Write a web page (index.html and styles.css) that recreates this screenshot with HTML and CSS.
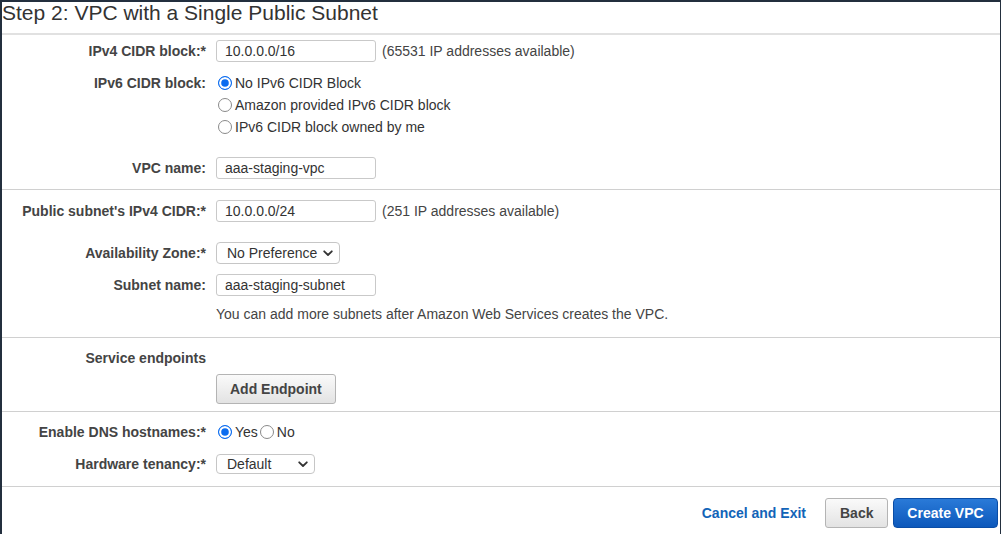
FILE: index.html
```html
<!DOCTYPE html>
<html>
<head>
<meta charset="utf-8">
<link rel="stylesheet" href="styles.css">
</head>
<body>
<div class="wizard">
  <h1 class="title">Step 2: VPC with a Single Public Subnet</h1>

  <section class="sec sec-vpc">
    <div class="row">
      <label class="lbl">IPv4 CIDR block:*</label>
      <div class="ctl"><input class="field w160" value="10.0.0.0/16" readonly><span class="hint">(65531 IP addresses available)</span></div>
    </div>
    <div class="row row-top gap10">
      <label class="lbl">IPv6 CIDR block:</label>
      <div class="ctl stack">
        <label class="opt"><input type="radio" class="radio" name="v6" checked>No IPv6 CIDR Block</label>
        <label class="opt"><input type="radio" class="radio" name="v6">Amazon provided IPv6 CIDR block</label>
        <label class="opt"><input type="radio" class="radio" name="v6">IPv6 CIDR block owned by me</label>
      </div>
    </div>
    <div class="row gap19">
      <label class="lbl">VPC name:</label>
      <div class="ctl"><input class="field w160" value="aaa-staging-vpc" readonly></div>
    </div>
  </section>

  <section class="sec sec-subnet">
    <div class="row">
      <label class="lbl">Public subnet's IPv4 CIDR:*</label>
      <div class="ctl"><input class="field w160" value="10.0.0.0/24" readonly><span class="hint">(251 IP addresses available)</span></div>
    </div>
    <div class="row gap20">
      <label class="lbl">Availability Zone:*</label>
      <div class="ctl">
        <div class="select w124"><span>No Preference</span><svg class="chev" width="10" height="7" viewBox="0 0 10 7"><path d="M1.2 1.3 L5 5 L8.8 1.3" fill="none" stroke="#333" stroke-width="1.8" stroke-linecap="round" stroke-linejoin="round"/></svg></div>
      </div>
    </div>
    <div class="row gap10">
      <label class="lbl">Subnet name:</label>
      <div class="ctl"><input class="field w160" value="aaa-staging-subnet" readonly></div>
    </div>
    <div class="row gap7">
      <span class="lbl"></span>
      <div class="ctl note">You can add more subnets after Amazon Web Services creates the VPC.</div>
    </div>
  </section>

  <section class="sec sec-endpoints">
    <div class="row">
      <label class="lbl">Service endpoints</label>
      <div class="ctl"></div>
    </div>
    <div class="row gap5">
      <span class="lbl"></span>
      <div class="ctl"><button class="btn">Add Endpoint</button></div>
    </div>
  </section>

  <section class="sec sec-dns">
    <div class="row">
      <label class="lbl">Enable DNS hostnames:*</label>
      <div class="ctl">
        <label class="opt"><input type="radio" class="radio" name="dns" checked>Yes</label>
        <label class="opt"><input type="radio" class="radio" name="dns">No</label>
      </div>
    </div>
    <div class="row gap10">
      <label class="lbl">Hardware tenancy:*</label>
      <div class="ctl">
        <div class="select w99 short"><span>Default</span><svg class="chev" width="10" height="7" viewBox="0 0 10 7"><path d="M1.2 1.3 L5 5 L8.8 1.3" fill="none" stroke="#333" stroke-width="1.8" stroke-linecap="round" stroke-linejoin="round"/></svg></div>
      </div>
    </div>
  </section>

  <footer class="actions">
    <a class="link" href="#">Cancel and Exit</a>
    <button class="btn back">Back</button>
    <button class="btn primary">Create VPC</button>
  </footer>
</div>
</body>
</html>
```

FILE: styles.css
```css
* { box-sizing: border-box; }

html, body {
  margin: 0;
  padding: 0;
  background: #fff;
}

body {
  font-family: "Liberation Sans", Arial, Helvetica, sans-serif;
  font-size: 14px;
  color: #444;
  width: 1001px;
  height: 534px;
  overflow: hidden;
}

.wizard {
  border-top: 2px solid #232f3e;
  border-left: 2px solid #232f3e;
  border-right: 1px solid #232f3e;
  height: 534px;
}

.title {
  margin: 0;
  height: 33px;
  padding: 0;
  font-size: 21px;
  font-weight: normal;
  line-height: 22px;
  color: #333;
  border-bottom: 2px solid #e1e1e1;
}

.sec {
  border-bottom: 1px solid #d0d0d0;
}

.sec-vpc { padding: 5px 0 10px; }
.sec-subnet { padding: 10px 0 12px; }
.sec-endpoints { padding: 9px 0 7px; }
.sec-dns { padding: 9px 0 11px; }

.row {
  display: grid;
  grid-template-columns: 204px 1fr;
  column-gap: 10px;
  align-items: center;
  min-height: 22px;
}

.row-top { align-items: start; }

.gap5 { margin-top: 5px; }
.gap7 { margin-top: 7px; }
.gap10 { margin-top: 10px; }
.gap19 { margin-top: 19px; }
.gap20 { margin-top: 20px; }

.lbl {
  text-align: right;
  font-weight: bold;
  line-height: 22px;
  color: #444;
  white-space: nowrap;
}

.ctl {
  display: flex;
  align-items: center;
  min-height: 22px;
}

.stack {
  flex-direction: column;
  align-items: flex-start;
}

.field {
  height: 22px;
  border: 1px solid #c9c9c9;
  border-radius: 3px;
  padding: 0 8px;
  font: 14px "Liberation Sans", Arial, sans-serif;
  color: #333;
  background: #fff;
  outline: none;
}

.w160 { width: 160px; }
.w124 { width: 124px; }
.w99 { width: 99px; }

.hint {
  margin-left: 6px;
  color: #444;
}

.opt {
  display: flex;
  align-items: center;
  height: 22px;
  line-height: 22px;
  color: #333;
  white-space: nowrap;
}

.radio {
  appearance: none;
  -webkit-appearance: none;
  width: 14px;
  height: 14px;
  margin: 0 3px 0 2px;
  border: 1px solid #8a8a8a;
  border-radius: 50%;
  background: #fff;
  flex: none;
}

.radio:checked {
  border: 1.5px solid #0b6cf0;
  background: #0b6cf0;
  box-shadow: inset 0 0 0 2.2px #fff;
}

.select {
  height: 22px;
  display: flex;
  align-items: center;
  justify-content: space-between;
  border: 1px solid #c6c6c6;
  border-radius: 4px;
  padding: 0 6px 0 10px;
  color: #333;
  background: #fff;
}

.select.short {
  height: 20px;
}

.chev { flex: none; }

.note {
  color: #444;
}

.btn {
  height: 30px;
  padding: 0 13px;
  border: 1px solid #b4b4b4;
  border-radius: 3px;
  background: linear-gradient(#fafafa, #e3e3e3);
  font: bold 14px "Liberation Sans", Arial, sans-serif;
  color: #444;
  cursor: pointer;
}

.actions {
  display: flex;
  justify-content: flex-end;
  align-items: center;
  padding: 11px 2px 0 0;
}

.link {
  font-weight: bold;
  color: #1264b8;
  text-decoration: none;
  margin-right: 19px;
}

.back {
  padding: 0 14px;
  width: 63px;
}

.primary {
  margin-left: 5px;
  width: 105px;
  padding: 0 10px;
  border: 1px solid #0a4da6;
  border-radius: 4px;
  background: linear-gradient(#2a7ad8, #0c58bb);
  color: #fff;
}
```
